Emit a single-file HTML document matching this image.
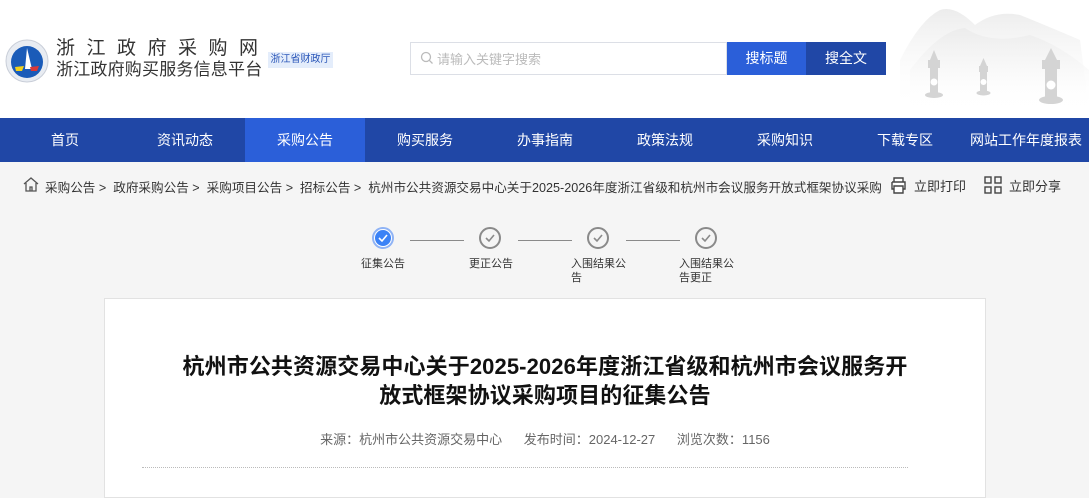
<!DOCTYPE html>
<html><head><meta charset="utf-8"><style>
*{margin:0;padding:0;box-sizing:border-box}
body{width:1089px;height:475px;overflow:hidden;background:#f5f5f5;font-family:"Liberation Sans","Noto Sans CJK SC",sans-serif;position:relative}
.hdr{position:absolute;left:0;top:0;width:1089px;height:118px;background:#fff}
.abs{position:absolute}
.nav{position:absolute;left:0;top:118px;width:1089px;height:44px;background:#2047a6}
.nav div{position:absolute;top:0;width:120px;height:44px;line-height:44px;text-align:center;color:#fff;font-size:14px}
.bc{position:absolute;top:176px;font-size:13px;color:#333;white-space:nowrap}
.step{position:absolute;top:227px;width:22px;height:22px;border:2px solid #8a8a8a;border-radius:50%}
.lbl{position:absolute;top:257px;font-size:11px;color:#333;line-height:14px;width:70px}
.line{position:absolute;top:240px;height:1px;background:#8a8a8a;width:54px}
</style></head><body>
<div class="hdr">
  <svg class="abs" style="left:5px;top:39px" width="44" height="44" viewBox="0 0 44 44">
    <circle cx="22" cy="22" r="21" fill="#e8ecf2" stroke="#c9ced8"/>
    <circle cx="22" cy="23" r="16" fill="#1a5bb8"/>
    <path d="M22 9 L27 30 L20 30 Z" fill="#fff"/>
    <path d="M10 28 L19 27 L17 32 L11 32Z" fill="#f2d21b"/>
    <path d="M25 28 L34 27 L32 32 L26 32Z" fill="#d93838"/>
  </svg>
  <div class="abs" style="left:56px;top:38px;font-size:19px;color:#333;letter-spacing:11.5px;line-height:22px">浙江政府采购网</div>
  <div class="abs" style="left:56px;top:59px;font-size:17px;color:#333;line-height:22px;letter-spacing:.2px">浙江政府购买服务信息平台</div>
  <div class="abs" style="left:268px;top:52px;width:65px;height:16px;background:#e4edfb;font-size:10px;color:#2a56b8;text-align:center;line-height:16px">浙江省财政厅</div>
  <div class="abs" style="left:410px;top:42px;width:317px;height:33px;border:1px solid #dcdfe6;background:#fff"></div>
  <svg class="abs" style="left:420px;top:51px" width="14" height="14" viewBox="0 0 14 14"><circle cx="6" cy="6" r="4.5" fill="none" stroke="#bbb" stroke-width="1.3"/><path d="M9.3 9.3L12.5 12.5" stroke="#bbb" stroke-width="1.3"/></svg>
  <div class="abs" style="left:437px;top:49px;font-size:13px;color:#bbb">请输入关键字搜索</div>
  <div class="abs" style="left:727px;top:42px;width:79px;height:33px;background:#2b5fd9;color:#fff;font-size:14px;text-align:center;line-height:33px">搜标题</div>
  <div class="abs" style="left:806px;top:42px;width:80px;height:33px;background:#2047a6;color:#fff;font-size:14px;text-align:center;line-height:33px">搜全文</div>
  <svg class="abs" style="left:880px;top:0" width="209" height="118" viewBox="0 0 209 118">
    <defs><linearGradient id="g" x1="0" y1="0" x2="0" y2="1"><stop offset="0" stop-color="#ececec"/><stop offset="1" stop-color="#fff" stop-opacity="0"/></linearGradient></defs>
    <path d="M20 60 Q40 20 60 10 Q75 5 95 25 Q115 10 140 15 Q165 25 200 40 L209 110 L20 110Z" fill="url(#g)"/>
    <path d="M30 70 Q60 30 85 28 Q110 45 150 35 Q180 45 209 70 L209 110 L30 110Z" fill="url(#g)"/>
    <g fill="#d4d4d4">
      <rect x="50" y="68" width="8" height="26"/><path d="M54 50 L50 60 L58 60Z"/><rect x="48" y="60" width="12" height="8"/><ellipse cx="54" cy="95" rx="9" ry="3"/>
      <rect x="100" y="72" width="7" height="20"/><path d="M103.5 58 L100 66 L107 66Z"/><rect x="99" y="66" width="9" height="6"/><ellipse cx="103.5" cy="93" rx="7" ry="2.5"/>
      <rect x="165" y="68" width="12" height="30"/><path d="M171 48 L165 60 L177 60Z"/><rect x="162" y="60" width="18" height="9"/><ellipse cx="171" cy="100" rx="12" ry="4"/>
    </g>
    <g fill="#fff"><circle cx="54" cy="82" r="3.5"/><circle cx="103.5" cy="82" r="3"/><circle cx="171" cy="85" r="4.5"/></g>
  </svg>
</div>
<div class="nav">
  <div style="left:5px">首页</div><div style="left:125px">资讯动态</div><div style="left:245px;background:#2b5fd9">采购公告</div><div style="left:365px">购买服务</div><div style="left:485px">办事指南</div><div style="left:605px">政策法规</div><div style="left:725px">采购知识</div><div style="left:845px">下载专区</div><div style="left:963px;width:126px">网站工作年度报表</div>
</div>
<svg class="abs" style="left:22px;top:176px" width="18" height="17" viewBox="0 0 18 17"><path d="M2 8L9 2L16 8M4 7V15H14V7M8 15V11H10V15" fill="none" stroke="#555" stroke-width="1.3"/></svg>
<div class="bc" style="left:45px;width:842px;overflow:hidden;font-size:12.6px;top:177px">采购公告 &gt;&nbsp; 政府采购公告 &gt;&nbsp; 采购项目公告 &gt;&nbsp; 招标公告 &gt;&nbsp; 杭州市公共资源交易中心关于2025-2026年度浙江省级和杭州市会议服务开放式框架协议采购</div>
<svg class="abs" style="left:889px;top:176px" width="19" height="18" viewBox="0 0 19 18"><path d="M5 6V2H14V6M3 6H16V13H14M5 13H3V6M5 10H14V17H5Z" fill="#fff" stroke="#444" stroke-width="1.4"/></svg>
<div class="bc" style="left:914px">立即打印</div>
<svg class="abs" style="left:984px;top:176px" width="18" height="18" viewBox="0 0 18 18" fill="none" stroke="#444" stroke-width="1.4"><rect x="1" y="1" width="6" height="6"/><rect x="11" y="1" width="6" height="6"/><rect x="1" y="11" width="6" height="6"/><rect x="11" y="11" width="6" height="6"/></svg>
<div class="bc" style="left:1009px">立即分享</div>

<div class="step" style="left:372px;border-color:#8fb3f5;background:#fff"><div style="position:absolute;left:1px;top:1px;width:16px;height:16px;border-radius:50%;background:#3b82f6"></div><svg style="position:absolute;left:3px;top:4px" width="12" height="10" viewBox="0 0 12 10"><path d="M2 5L5 8L10 2" fill="none" stroke="#fff" stroke-width="1.6"/></svg></div>
<div class="line" style="left:410px"></div>
<div class="step" style="left:479px"><svg style="position:absolute;left:3px;top:4px" width="12" height="10" viewBox="0 0 12 10"><path d="M2 5L5 8L10 2" fill="none" stroke="#8a8a8a" stroke-width="1.6"/></svg></div>
<div class="line" style="left:518px"></div>
<div class="step" style="left:587px"><svg style="position:absolute;left:3px;top:4px" width="12" height="10" viewBox="0 0 12 10"><path d="M2 5L5 8L10 2" fill="none" stroke="#8a8a8a" stroke-width="1.6"/></svg></div>
<div class="line" style="left:626px"></div>
<div class="step" style="left:695px"><svg style="position:absolute;left:3px;top:4px" width="12" height="10" viewBox="0 0 12 10"><path d="M2 5L5 8L10 2" fill="none" stroke="#8a8a8a" stroke-width="1.6"/></svg></div>
<div class="lbl" style="left:361px">征集公告</div>
<div class="lbl" style="left:469px">更正公告</div>
<div class="lbl" style="left:571px;width:58px">入围结果公告</div>
<div class="lbl" style="left:679px;width:58px">入围结果公告更正</div>

<div class="abs" style="left:104px;top:298px;width:882px;height:200px;background:#fff;border:1px solid #e2e2e2"></div>
<div class="abs" style="left:140px;top:352px;width:810px;text-align:center;font-size:22px;font-weight:bold;color:#111;line-height:29px;letter-spacing:0.1px">杭州市公共资源交易中心关于2025-2026年度浙江省级和杭州市会议服务开<br>放式框架协议采购项目的征集公告</div>
<div class="abs" style="left:150px;top:429px;width:790px;text-align:center;font-size:13px;color:#666;word-spacing:0">来源：杭州市公共资源交易中心&nbsp;&nbsp;&nbsp;&nbsp;&nbsp; 发布时间：2024-12-27&nbsp;&nbsp;&nbsp;&nbsp;&nbsp; 浏览次数：1156</div>
<div class="abs" style="left:142px;top:467px;width:766px;border-top:1px dotted #bbb"></div>
</body></html>
